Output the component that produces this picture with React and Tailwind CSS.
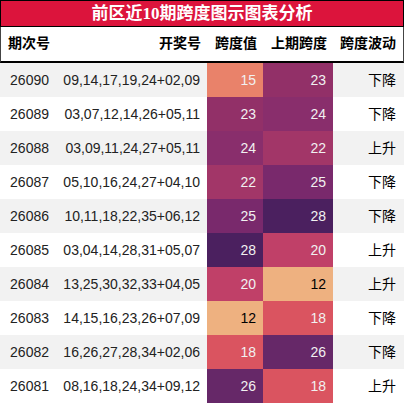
import React from 'react';

const rows = [
    { id: '26090', nums: '09,14,17,19,24+02,09', span: 15, prev: 23, trend: '下降' },
    { id: '26089', nums: '03,07,12,14,26+05,11', span: 23, prev: 24, trend: '下降' },
    { id: '26088', nums: '03,09,11,24,27+05,11', span: 24, prev: 22, trend: '上升' },
    { id: '26087', nums: '05,10,16,24,27+04,10', span: 22, prev: 25, trend: '下降' },
    { id: '26086', nums: '10,11,18,22,35+06,12', span: 25, prev: 28, trend: '下降' },
    { id: '26085', nums: '03,04,14,28,31+05,07', span: 28, prev: 20, trend: '上升' },
    { id: '26084', nums: '13,25,30,32,33+04,05', span: 20, prev: 12, trend: '上升' },
    { id: '26083', nums: '14,15,16,23,26+07,09', span: 12, prev: 18, trend: '下降' },
    { id: '26082', nums: '16,26,27,28,34+02,06', span: 18, prev: 26, trend: '下降' },
    { id: '26081', nums: '08,16,18,24,34+09,12', span: 26, prev: 18, trend: '上升' },
];

// heat colours per value
const heat = {
    12: 'bg-[#eeb180] text-black',
    15: 'bg-[#e9826a] text-[#f1f1f1]',
    18: 'bg-[#da5460] text-[#f1f1f1]',
    20: 'bg-[#c04068] text-[#f1f1f1]',
    22: 'bg-[#a23668] text-[#f1f1f1]',
    23: 'bg-[#923068] text-[#f1f1f1]',
    24: 'bg-[#892e6c] text-[#f1f1f1]',
    25: 'bg-[#79296c] text-[#f1f1f1]',
    26: 'bg-[#662868] text-[#f1f1f1]',
    28: 'bg-[#4b205f] text-[#f1f1f1]',
};

const cols = 'grid grid-cols-[56px_151px_56px_70px_1fr]';

const App = () => {
    return (
        <div className="w-[404px] h-[404px] bg-white overflow-hidden font-['Liberation_Sans','Noto_Sans_CJK_SC',sans-serif] text-[14px]">
            <div className="h-[27px] border border-black bg-[#dc143c] flex items-center justify-center text-white font-bold text-[17px] font-['Liberation_Serif','Noto_Sans_CJK_SC',serif]">
                前区近10期跨度图示图表分析
            </div>
            <div className={`${cols} h-[36px] border-x border-[#444] border-b-2 border-b-black font-bold text-black`}>
                {['期次号', '开奖号', '跨度值', '上期跨度', '跨度波动'].map(h => (
                    <div key={h} className="flex items-center justify-end pr-[7px] pb-[1px]">{h}</div>
                ))}
            </div>
            {rows.map((r, i) => (
                <div key={r.id} className={`${cols} h-[34px] text-[#222] ${i % 2 === 0 ? 'bg-[#f2f2f2]' : 'bg-white'}`}>
                    <div className="flex items-center justify-end pr-[7px]">{r.id}</div>
                    <div className="flex items-center justify-end pr-[7px]">{r.nums}</div>
                    <div className={`flex items-center justify-end pr-[7px] ${heat[r.span]}`}>{r.span}</div>
                    <div className={`flex items-center justify-end pr-[7px] ${heat[r.prev]}`}>{r.prev}</div>
                    <div className="flex items-center justify-end pr-[8px] text-black">{r.trend}</div>
                </div>
            ))}
        </div>
    );
};

export default App;
